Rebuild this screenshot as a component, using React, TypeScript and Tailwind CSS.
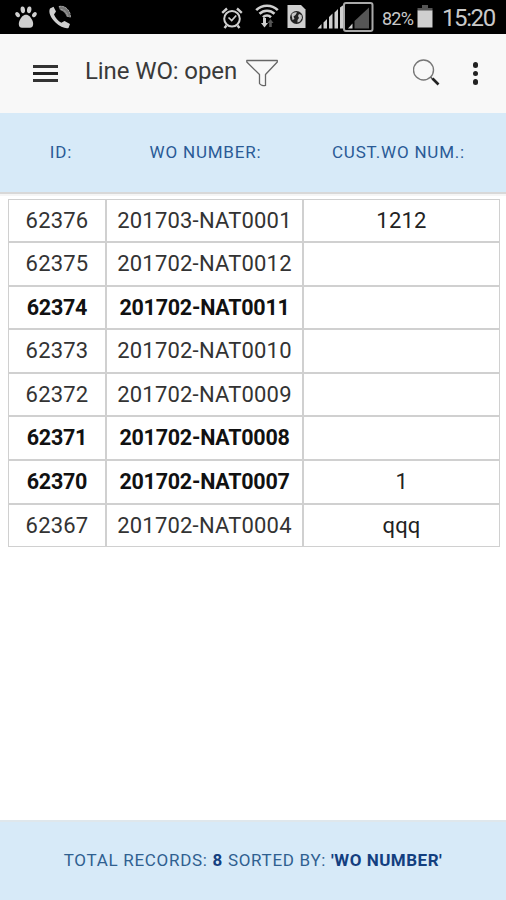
/**
 * Work order list
 * Mobile screen with the open line work orders
 */

import React from 'react';

interface WorkOrder {
  id: string;
  number: string;
  customer?: string;
  bold?: boolean;
}

const orders: WorkOrder[] = [
  { id: '62376', number: '201703-NAT0001', customer: '1212' },
  { id: '62375', number: '201702-NAT0012' },
  { id: '62374', number: '201702-NAT0011', bold: true },
  { id: '62373', number: '201702-NAT0010' },
  { id: '62372', number: '201702-NAT0009' },
  { id: '62371', number: '201702-NAT0008', bold: true },
  { id: '62370', number: '201702-NAT0007', customer: '1', bold: true },
  { id: '62367', number: '201702-NAT0004', customer: 'qqq' },
];

const PawIcon = () => (
  <svg width="22" height="23" viewBox="0 0 22 23" fill="#cfcfcf">
    <ellipse cx="7.8" cy="3.8" rx="2.2" ry="3.4" transform="rotate(-8 7.8 3.8)" />
    <ellipse cx="14.2" cy="3.8" rx="2.2" ry="3.4" transform="rotate(8 14.2 3.8)" />
    <ellipse cx="2.6" cy="8.6" rx="2" ry="2.8" transform="rotate(-35 2.6 8.6)" />
    <ellipse cx="19.4" cy="8.6" rx="2" ry="2.8" transform="rotate(35 19.4 8.6)" />
    <path d="M11 8.8c3 0 4.600 2.600 6 5 2 3.500 1.500 8-2 8H7c-3.500 0-4-4.500-2-8 1.400-2.400 3-5 6-5z" />
  </svg>
);

const PhoneIcon = () => (
  <svg width="24" height="24" viewBox="0 0 24 24" fill="none">
    <path
      d="M2 3.500 5.500 1.800 8 6.500 6 9.500c1.500 3.500 4 6.500 7.300 8.300L16.500 16l5.500 3-1.500 4c-3 .8-8.500-1-13-5.500S0 7.500 2 3.500z"
      fill="#cfcfcf"
    />
    <path d="M10.500 1.500c6-2 12.500 4 11.500 11L18.500 11.500c-1-3-3-5.500-6.500-6.500z" fill="#777" />
    <path d="M11 1.500c6-1.500 12 4 11.500 11.500M13 4.500c3.500.5 6.500 3.500 7 7.500" stroke="#aaa" strokeWidth=".9" strokeDasharray="2.500 .6" />
  </svg>
);

const AlarmIcon = () => (
  <svg width="22" height="22" viewBox="0 0 22 22" fill="none" stroke="#cfcfcf" strokeWidth="2">
    <circle cx="11" cy="11.800" r="7.800" />
    <path d="M1.200 5.800 6 1.500M20.800 5.800 16 1.500M5.500 18.500 3.500 21M16.500 18.500l2 2.500" strokeWidth="2.400" />
    <path d="m7.500 10.500 3.200 3 4.500-5" strokeWidth="1.700" />
  </svg>
);

const WifiIcon = () => (
  <svg width="24" height="24" viewBox="0 0 24 24" fill="none" stroke="#cfcfcf" strokeWidth="2.600">
    <path d="M1.200 6.200c6-6 15.600-6 21.600 0M4.500 9.800c4.200-4 10.800-4 15 0M8 13.300c2.300-2.200 5.700-2.200 8 0" />
    <path d="M9.500 14v6" strokeWidth="3" />
    <path d="M6 19h7l-3.500 4.500z" fill="#cfcfcf" stroke="none" />
    <path d="M15.500 23v-5" stroke="#555" />
    <path d="M12.500 19h6L15.500 15z" fill="#555" stroke="none" />
  </svg>
);

const SimGlobeIcon = () => (
  <svg width="19" height="23" viewBox="0 0 19 23">
    <path d="M.5 0H14l4.500 4.500V23H.5z" fill="#cfcfcf" />
    <circle cx="9.500" cy="12.500" r="6.500" fill="#222" />
    <path d="M4.500 9.500C6 7.500 8 7 10 7.500L8.500 10 6.500 11.500 7.500 14 5.500 15z" fill="#c4c4c4" />
    <path d="m12 9 2.500 1 .5 3-2 3.500-2.500 1V15L12 13l-1-2z" fill="#c4c4c4" />
  </svg>
);

// Two SIM signals, the second one without service
const SignalIcon = () => (
  <svg width="57" height="32" viewBox="0 0 57 32">
    <g fill="#cfcfcf">
      <path d="M.5 27.500 4.500 23v4.500zM6.500 21.500l3.500-3.500v9.500H6.500zM12 16l3.500-3.500v15H12zM17.500 11.500 21 8v19.500h-3.500zM23 6.500l4-3v24h-4z" />
      <path d="M31 27.500l4.500-5v5z" />
    </g>
    <path d="M37.500 20 52 6.500v21H37.500z" fill="#555" />
    <rect x="27" y="2" width="28.500" height="28" rx="2" fill="none" stroke="#a9a9a9" strokeWidth="2" />
  </svg>
);

const BatteryIcon = () => (
  <svg width="16" height="23" viewBox="0 0 16 23">
    <path d="M5 0h6v3h4.500v3H.5V3H5z" fill="#555" />
    <path d="M.5 5.500h15V22.500H.5z" fill="#cfcfcf" />
  </svg>
);

const StatusBar = () => (
  <div className="flex h-[34px] items-start bg-black text-[#c9c9c9]">
    <div className="ml-[15px] mt-[6px]"><PawIcon /></div>
    <div className="ml-[11px] mt-[5px]"><PhoneIcon /></div>
    <div className="ml-auto mt-[7px]"><AlarmIcon /></div>
    <div className="ml-[12px] mt-[4px]"><WifiIcon /></div>
    <div className="ml-[8px] mt-[5px]"><SimGlobeIcon /></div>
    <div className="ml-[11px] mt-[1px]"><SignalIcon /></div>
    <span className="ml-[8px] mt-[7px] w-[35px] text-[18px] leading-[24px] tracking-[-0.8px]">82%</span>
    <div className="mt-[5px]"><BatteryIcon /></div>
    <span className="ml-[9px] w-[64px] text-[24px] leading-[36px] tracking-[-1.4px]">15:20</span>
  </div>
);

const TitleBar = () => (
  <header className="flex h-[79px] items-start bg-[#f8f8f8] text-[#333]">
    <div className="ml-[33px] mt-[31px] flex w-[25px] flex-col gap-[4px]">
      <span className="h-[3px] bg-[#333]" />
      <span className="h-[3px] bg-[#222]" />
      <span className="h-[3px] bg-[#333]" />
    </div>
    <h1 className="ml-[27px] mt-[22px] w-[155px] whitespace-nowrap text-[24px] font-normal leading-[30px] tracking-[-0.1px] text-[#3a3a3a]">Line WO: open</h1>
    <svg className="ml-[6px] mt-[25px]" width="32" height="28" viewBox="0 0 32 28" fill="none" stroke="#666" strokeWidth="1.300">
      <path d="M.8 1.500h30.500v1.500L19.500 15.500v11c-2 .6-5-.4-6-2v-9L.8 3z" strokeLinejoin="round" />
    </svg>
    <svg className="ml-auto mt-[24px]" width="28" height="30" viewBox="0 0 28 30" fill="none">
      <circle cx="10.500" cy="12" r="10" stroke="#777" strokeWidth="1.400" />
      <path d="m17.700 19.200 2.500 2.500" stroke="#555" strokeWidth="1.500" />
      <path d="m19.500 20.500 6 6" stroke="#222" strokeWidth="2.600" />
    </svg>
    <div className="ml-[32px] mr-[28px] mt-[28px] flex flex-col gap-[3px]">
      <span className="size-[5.500px] rounded-full bg-[#222]" />
      <span className="size-[5.500px] rounded-full bg-[#222]" />
      <span className="size-[5.500px] rounded-full bg-[#222]" />
    </div>
  </header>
);

const ColumnHeader = () => (
  <div className="grid h-[81px] grid-cols-[98px_197px_197px] border-b-2 border-[#d8d8d8] bg-[#d7eaf8] px-[12px] text-center text-[17px] leading-[79px] tracking-[0.8px] text-[#2a5a96]">
    <span>ID:</span>
    <span className="-ml-[6px]">WO NUMBER:</span>
    <span className="-ml-[14px]">CUST.WO NUM.:</span>
  </div>
);

const Row = ({ order }: { order: WorkOrder }) => (
  <div
    className={`grid grid-cols-[96px_195px_1fr] gap-[2px] text-center leading-[41px] ${
      order.bold ? 'text-[21.5px] font-bold tracking-[-0.25px] text-[#111]' : 'text-[22px] font-normal tracking-[0.2px] text-[#333]'
    }`}
  >
    <span className="bg-white">{order.id}</span>
    <span className="bg-white">{order.number}</span>
    <span className="bg-white text-[22px] font-normal text-[#222]">{order.customer}</span>
  </div>
);

export default function App() {
  return (
    <div className="flex h-[900px] w-[506px] flex-col overflow-hidden bg-white font-['Roboto',sans-serif]">
      <StatusBar />
      <TitleBar />
      <ColumnHeader />
      <main className="flex-1 border-t-2 border-[#f5f5f5] pl-[8px] pr-[6px] pt-[3px]">
        <div className="grid h-[348px] grid-rows-[41px_42px_41px_42px_41px_42px_42px_41px] gap-[2px] border border-[#d0d0d0] bg-[#d0d0d0]">
          {orders.map((order) => (
            <Row key={order.id} order={order} />
          ))}
        </div>
      </main>
      <footer className="h-[80px] border-t-2 border-[#dfe7ec] bg-[#d7eaf8] text-center text-[17px] leading-[77px] tracking-[0.7px] text-[#2f6090]">
        TOTAL RECORDS: <b className="text-[#133f80]">8</b> SORTED BY: <b className="tracking-[0.5px] text-[#133f80]">'WO NUMBER'</b>
      </footer>
    </div>
  );
}
